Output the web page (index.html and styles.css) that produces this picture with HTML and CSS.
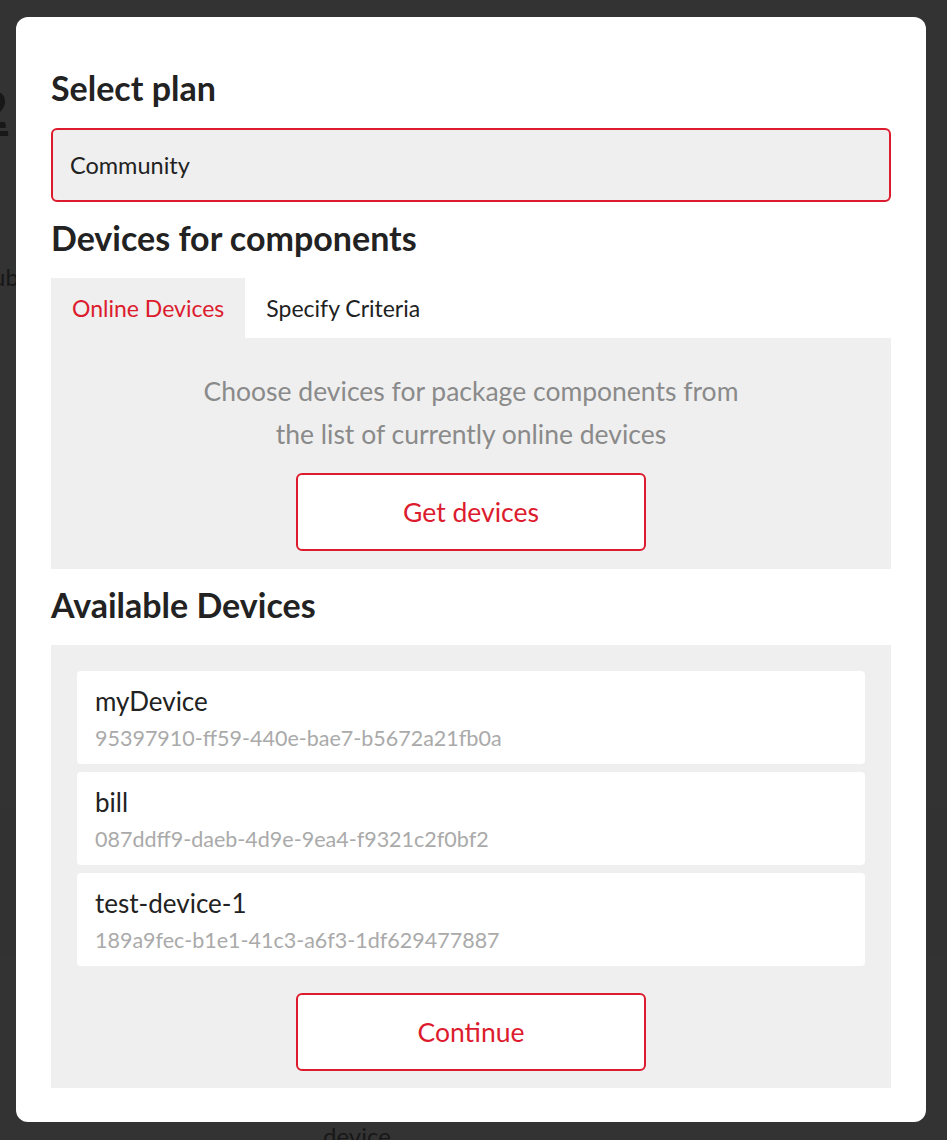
FILE: index.html
```html
<!DOCTYPE html>
<html lang="en">
<head>
<meta charset="utf-8">
<title>Select plan</title>
<link rel="stylesheet" href="styles.css">
</head>
<body>
<div class="page">
  <div class="page-title">2</div>
  <div class="page-sub">ub</div>
  <div class="page-band"></div>
  <div class="page-foot">device</div>
</div>
<div class="overlay"></div>
<div class="modal">
  <h2 class="heading">Select plan</h2>
  <div class="select">Community</div>
  <h2 class="heading">Devices for components</h2>
  <div class="tabs">
    <div class="tab active">Online Devices</div>
    <div class="tab">Specify Criteria</div>
  </div>
  <div class="panel intro">
    <p class="desc">Choose devices for package components from<br>the list of currently online devices</p>
    <button class="btn">Get devices</button>
  </div>
  <h2 class="heading">Available Devices</h2>
  <div class="panel devices">
    <div class="card">
      <div class="name">myDevice</div>
      <div class="uid">95397910-ff59-440e-bae7-b5672a21fb0a</div>
    </div>
    <div class="card">
      <div class="name">bill</div>
      <div class="uid">087ddff9-daeb-4d9e-9ea4-f9321c2f0bf2</div>
    </div>
    <div class="card">
      <div class="name">test-device-1</div>
      <div class="uid">189a9fec-b1e1-41c3-a6f3-1df629477887</div>
    </div>
    <button class="btn continue">Continue</button>
  </div>
</div>
</body>
</html>
```
FILE: styles.css
```css
* { box-sizing: border-box; }
html, body { margin: 0; padding: 0; }
body {
  width: 947px;
  height: 1140px;
  overflow: hidden;
  background: #ffffff;
  font-family: "Source Sans Pro", "Lato", "Noto Sans", sans-serif;
  color: #222;
}
.page {
  height: 1140px;
  padding-top: 78px;
  color: #8a8a8a;
}
.page-title {
  font-size: 52px;
  font-weight: 700;
  line-height: 60px;
  margin-left: -22px;
  text-decoration: underline;
  color: #777;
}
.page-sub {
  margin-top: 124px;
  margin-left: -8px;
  font-size: 24px;
  line-height: 30px;
  color: #777;
}
.page-band {
  margin-top: 515px;
  height: 150px;
  background: #f8f8f8;
}
.page-foot {
  margin-top: 164px;
  margin-left: 323px;
  font-size: 24px;
  line-height: 30px;
  color: #777;
}
.overlay {
  position: fixed;
  inset: 0;
  background: rgba(0, 0, 0, 0.8);
}
.modal {
  position: fixed;
  top: 17px;
  left: 16px;
  width: 910px;
  height: 1105px;
  background: #fff;
  border-radius: 12px;
  padding: 35px;
}
.heading {
  margin: 16px 0 20px;
  font-size: 34px;
  line-height: 40px;
  font-weight: 700;
  color: #222;
}
.select {
  height: 74px;
  border: 2px solid #dc1c2e;
  border-radius: 6px;
  background: #efefef;
  padding: 0 17px;
  display: flex;
  align-items: center;
  font-size: 23.5px;
  color: #222;
}
.tabs {
  display: flex;
  height: 60px;
}
.tab {
  display: flex;
  align-items: center;
  padding: 0 21px;
  font-size: 23px;
  color: #222;
  background: #fff;
}
.tab.active {
  background: #efefef;
  color: #dc1c2e;
}
.panel {
  background: #efefef;
}
.intro {
  padding: 32px 0 18px;
  display: flex;
  flex-direction: column;
  align-items: center;
}
.desc {
  margin: 0 0 17px;
  text-align: center;
  font-size: 26.5px;
  line-height: 43px;
  color: #8a8a8a;
}
.btn {
  width: 350px;
  height: 78px;
  border: 2px solid #dc1c2e;
  border-radius: 6px;
  background: #fff;
  color: #dc1c2e;
  font-family: inherit;
  font-size: 26.5px;
  cursor: pointer;
}
.devices {
  padding: 26px 26px 17px;
  display: flex;
  flex-direction: column;
  gap: 8px;
}
.card {
  background: #fff;
  border-radius: 4px;
  height: 93px;
  padding: 12px 18px 0;
}
.name {
  font-size: 26px;
  line-height: 36px;
  color: #222;
}
.uid {
  font-size: 21.5px;
  line-height: 38px;
  color: #aaa;
}
.continue {
  align-self: center;
  margin-top: 19px;
}
```
